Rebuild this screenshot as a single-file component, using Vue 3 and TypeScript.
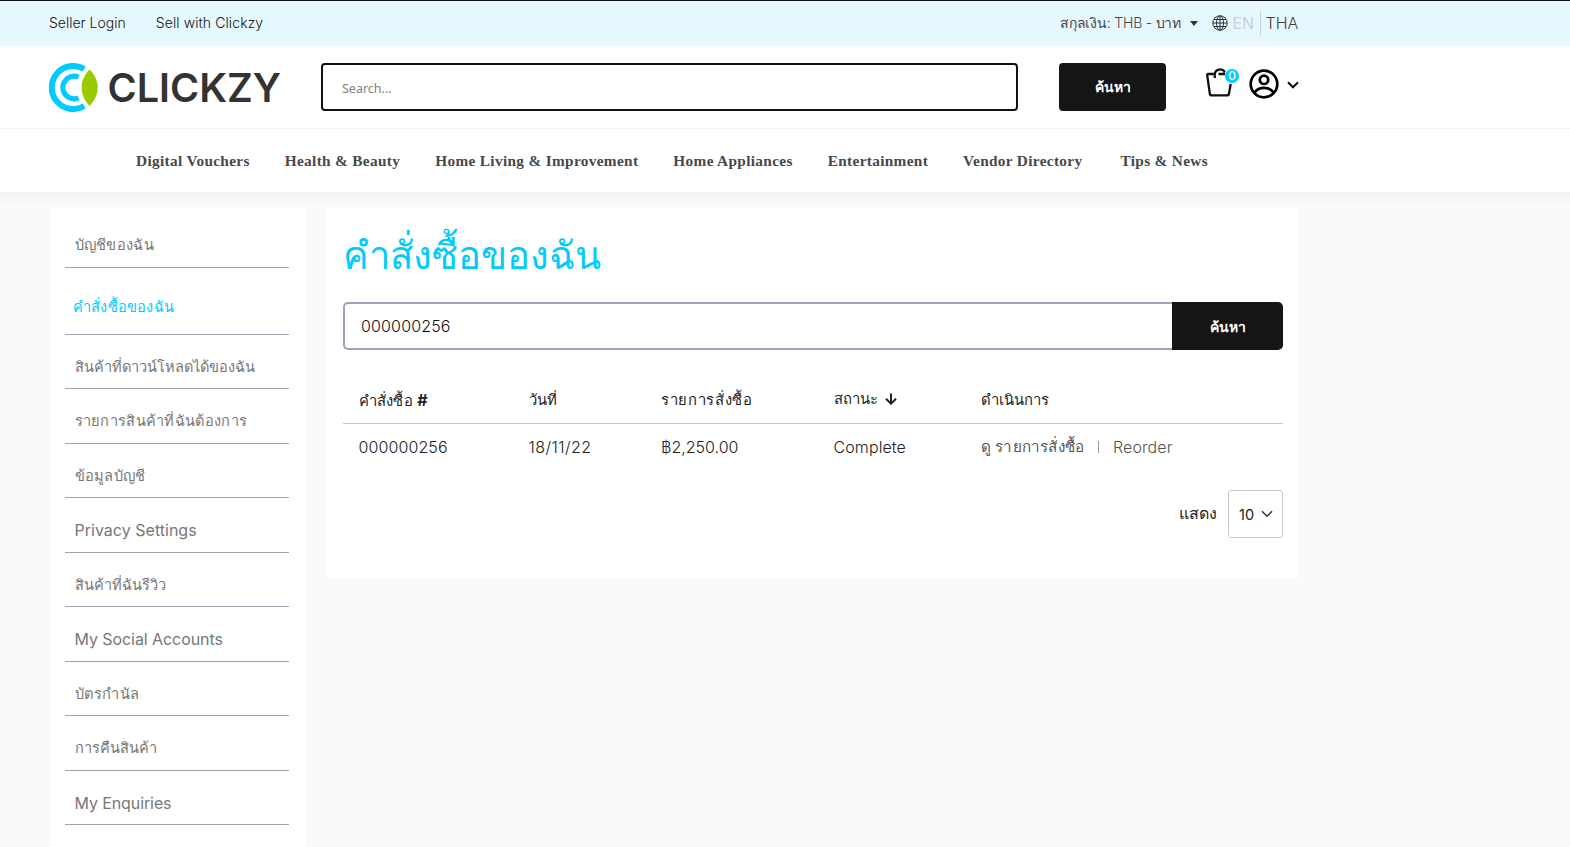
<script setup lang="ts">
interface Entry { label: string; spacing: number; thai?: boolean; active?: boolean }

const navItems: string[] = [
  'Digital Vouchers', 'Health & Beauty', 'Home Living & Improvement', 'Home Appliances',
  'Entertainment', 'Vendor Directory', 'Tips & News',
]

const entries: Entry[] = [
  { label: 'บัญชีของฉัน', spacing: 0.3, thai: true },
  { label: 'คำสั่งซื้อของฉัน', spacing: 0.2, thai: true, active: true },
  { label: 'สินค้าที่ดาวน์โหลดได้ของฉัน', spacing: 0, thai: true },
  { label: 'รายการสินค้าที่ฉันต้องการ', spacing: 0.3, thai: true },
  { label: 'ข้อมูลบัญชี', spacing: 0.25, thai: true },
  { label: 'Privacy Settings', spacing: 0.02 },
  { label: 'สินค้าที่ฉันรีวิว', spacing: 0, thai: true },
  { label: 'My Social Accounts', spacing: -0.07 },
  { label: 'บัตรกำนัล', spacing: 0.6, thai: true },
  { label: 'การคืนสินค้า', spacing: 0.1, thai: true },
  { label: 'My Enquiries', spacing: -0.1 },
]
</script>

<template>
  <div class="page">
    <div class="topbar">
      <div class="links"><a>Seller Login</a><a class="sell">Sell with Clickzy</a></div>
      <div class="locale">
        <span class="currency">สกุลเงิน: THB - บาท</span>
        <i class="caret"></i>
        <svg class="globe" viewBox="0 0 16 16"><g fill="none" stroke="#2b3338" stroke-width="1"><circle cx="8" cy="8" r="7.200" /><ellipse cx="8" cy="8" rx="3.500" ry="7.200" /><path d="M8 .8v14.400M.8 8h14.400M2 4.500h12M2 11.500h12" /></g></svg>
        <span class="en">EN</span>
        <span class="tha">THA</span>
      </div>
    </div>

    <header class="header">
      <div class="logo">
        <svg class="mark" viewBox="0 0 49 49">
          <g fill="none" stroke="#00cbff">
            <path d="M35.200 6A21.500 21.500 0 1 0 35.200 43" stroke-width="6" />
            <path d="M29.500 14.200A11.200 11.200 0 1 0 29.500 34.800" stroke-width="5.200" />
          </g>
          <path d="M40.500 6.500C51.500 17.500 51.500 31.500 40.500 43C30 31.500 30 17.500 40.500 6.500Z" fill="#99cb00" />
        </svg>
        <span class="brand">CLICKZY</span>
      </div>
      <div class="search">Search...</div>
      <button class="btn" type="button">ค้นหา</button>
      <div class="cart">
        <svg viewBox="0 0 34 30"><path d="M10 6H3.200Q2 6 2.200 7.200L4.800 25.500Q5 27.300 6.800 27.300H22Q23.800 27.300 24 25.500L25.700 16M9.800 10V6.500C9.800 .2 19 .2 19.600 4.500M13.500 6H20" fill="none" stroke="#111" stroke-width="2.300" stroke-linejoin="round" /></svg>
        <span class="badge">0</span>
      </div>
      <svg class="user" viewBox="0 0 30 30"><g fill="none" stroke="#000" stroke-width="2.700"><circle cx="15" cy="15" r="13.300" /><circle cx="15" cy="10.800" r="4.200" /><path d="M5.300 23.700C10 17.300 20 17.300 24.700 23.700" /></g></svg>
      <svg class="chev" viewBox="0 0 12 8"><path d="M1 1.300L6 6.200L11 1.300" fill="none" stroke="#111" stroke-width="2.100" /></svg>
    </header>

    <nav class="nav"><a v-for="n in navItems" :key="n">{{ n }}</a></nav>

    <div class="body">
      <aside class="side">
        <div
          v-for="e in entries"
          :key="e.label"
          class="entry"
          :class="{ active: e.active, thai: e.thai }"
          :style="{ letterSpacing: e.spacing + 'px' }"
        >{{ e.label }}</div>
      </aside>

      <main class="main">
        <h1>คำสั่งซื้อของฉัน</h1>
        <div class="find">
          <div class="field">000000256</div>
          <button type="button">ค้นหา</button>
        </div>
        <div class="row head">
          <span class="order">คำสั่งซื้อ <b>#</b></span>
          <span>วันที่</span>
          <span class="wide">รายการสั่งซื้อ</span>
          <span class="status">สถานะ
            <svg viewBox="0 0 12 12"><path d="M6 .5V10.500M1 5.800L6 10.700L11 5.800" fill="none" stroke="#222" stroke-width="2" /></svg>
          </span>
          <span>ดำเนินการ</span>
        </div>
        <div class="row data">
          <span>000000256</span>
          <span class="date">18/11/22</span>
          <span class="price">฿2,250.00</span>
          <span>Complete</span>
          <span class="actions"><a class="view">ดู รายการสั่งซื้อ</a><i class="sep"></i><a>Reorder</a></span>
        </div>
        <div class="pager">
          <span class="show">แสดง</span>
          <div class="select">10<svg viewBox="0 0 12 8"><path d="M1 1.300L6 6.300L11 1.300" fill="none" stroke="#333" stroke-width="1.500" /></svg></div>
        </div>
      </main>
    </div>
  </div>
</template>

<style>
body { margin: 0; overflow: hidden; }
</style>

<style scoped>
.page { box-sizing: border-box; height: 847px; overflow: hidden; background: #fafafc; font-family: Inter, "Noto Sans", sans-serif; font-size: 16px; font-weight: 300; color: #222; display: flex; flex-direction: column; }
.page * { box-sizing: border-box; }
.topbar { flex: none; height: 46px; background: #e6f8fd; border-top: 1px solid #111; display: flex; align-items: center; justify-content: space-between; padding: 0 271px 2px 49px; font-size: 14px; color: #151515; }
.links { display: flex; gap: 30px; }
.sell { letter-spacing: 0.1px; }
.locale { display: flex; align-items: center; color: #444; white-space: nowrap; }
.currency { letter-spacing: -0.2px; width: 122px; }
.caret { margin: 2px 14px 0 7.500px; border: 4px solid transparent; border-top: 5px solid #333; border-bottom: 0; }
.globe { width: 16px; height: 16px; }
.en { font-size: 16px; color: #ccd0d8; width: 33px; padding-left: 5px; line-height: 24px; border-right: 1px solid #c8d0d6; font-weight: 400; }
.tha { font-size: 16px; padding-left: 5px; width: 38.500px; }

.header { flex: none; height: 83px; background: #fff; border-bottom: 1px solid #f1f1f3; display: flex; align-items: flex-start; padding: 17px 0 0 49px; }
.logo { display: flex; width: 272px; height: 49px; align-items: center; }
.mark { width: 49px; height: 49px; }
.brand { margin-left: 9.500px; font-size: 39.600px; font-weight: 600; color: #333; }
.search { width: 697px; height: 48px; border: 2px solid #111; border-radius: 4px; padding: 2px 0 0 19px; font: 400 12.500px/44px "Noto Sans", sans-serif; color: #808080; }
.btn { width: 107px; height: 48px; margin-left: 41px; border: 0; border-radius: 4px; background: #151515; color: #fff; font: 700 14px Inter, "Noto Sans", sans-serif; padding: 0; }
.cart { position: relative; width: 34px; height: 30px; margin: 5px 0 0 39px; }
.cart svg { display: block; width: 34px; height: 30px; }
.badge { position: absolute; left: 20px; top: 1px; width: 14px; height: 14px; border-radius: 50%; background: #00cbff; color: #fff; font-size: 12px; font-weight: 500; line-height: 14px; text-align: center; }
.user { width: 30px; height: 30px; margin: 6px 0 0 10px; }
.chev { width: 12px; height: 8px; margin: 18px 0 0 8px; }

.nav { flex: none; height: 63px; background: #fff; display: flex; gap: 35px; align-items: center; padding-left: 136px; padding-top: 0; font: bold 15.300px "Liberation Serif", serif; letter-spacing: 0.335px; color: #484848; white-space: nowrap; }
.nav a:last-child { margin-left: 3px; }

.body { flex: 1; display: flex; align-items: flex-start; padding: 15px 271px 0 49px; gap: 22px; background: linear-gradient(#f3f3f6, #fafafc 16px); }
.side { width: 256px; height: 640px; background: #fff; padding: 6px 16px 0; }
.entry { height: 54.500px; padding: 10px 0 0 9.500px; line-height: 44px; border-bottom: 1px solid #9fa3b1; color: #777; white-space: nowrap; font-weight: 400; }
.entry.thai { font-size: 14.600px; }
.entry.active { height: 67px; padding: 17px 0 0 8px; color: #00cbff; line-height: 44px; }

.main { flex: 1; height: 371px; background: #fff; padding: 0 16px; }
h1 { margin: 0; height: 95px; padding-top: 18px; font-size: 38.200px; line-height: 60px; font-weight: 300; color: #00cbff; }
.find { display: flex; height: 48px; }
.field { flex: 1; border: 2px solid #9fa3b5; border-right: 0; border-radius: 5px 0 0 5px; line-height: 45px; padding-left: 16px; letter-spacing: 0.15px; color: #111; }
.find button { width: 111px; border: 0; border-radius: 0 5px 5px 0; background: #151515; color: #fff; font: 700 14px Inter, "Noto Sans", sans-serif; padding: 1px 0 0; }
.row { display: grid; grid-template-columns: 170px 132.500px 172.500px 147px 1fr; padding-left: 15.500px; white-space: nowrap; }
.head { height: 74px; border-bottom: 1px solid #c8c8c8; font-size: 14.800px; font-weight: 500; line-height: 52px; padding-top: 24px; }
.order { letter-spacing: 0.3px; }
.head b { font-size: 16px; font-weight: 700; }
.wide { letter-spacing: 0.65px; }
.status { display: flex; align-items: center; gap: 7px; height: 50px; }
.status svg { width: 12px; height: 12px; }
.data { height: 66px; line-height: 46px; letter-spacing: 0.1px; }
.date { letter-spacing: 0.45px; }
.price { letter-spacing: 0; }
.actions { display: flex; align-items: center; height: 46px; color: #555; }
.view { font-size: 15.200px; width: 117.500px; letter-spacing: 0.2px; }
.sep { width: 1px; height: 12px; background: #999; margin-right: 14px; }
.pager { display: flex; justify-content: flex-end; align-items: center; }
.show { font-weight: 500; margin-right: 11px; padding-bottom: 1px; }
.select { width: 55px; height: 48px; border: 1px solid #c8c8c8; border-radius: 3px; display: flex; align-items: center; padding-left: 10px; gap: 7px; font-size: 14.500px; font-weight: 400; }
.select svg { width: 12px; height: 8px; }
</style>
